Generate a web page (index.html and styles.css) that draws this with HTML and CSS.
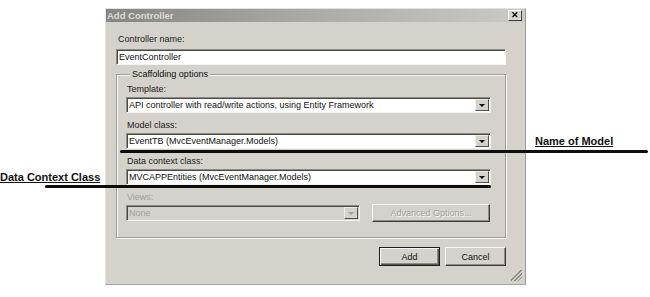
FILE: index.html
```html
<!DOCTYPE html>
<html>
<head>
<meta charset="utf-8">
<link rel="stylesheet" href="styles.css">
</head>
<body>
<div class="page">
  <div class="dialog">
    <div class="titlebar">
      <span class="title">Add Controller</span>
      <span class="close">&#x2715;</span>
    </div>
    <div class="content">
      <div class="label first">Controller name:</div>
      <div class="textbox">EventController</div>
      <div class="group">
        <div class="legend">Scaffolding options</div>
        <div class="label top">Template:</div>
        <div class="combo"><span class="val">API controller with read/write actions, using Entity Framework</span><span class="drop"><i class="arrow"></i></span></div>
        <div class="label">Model class:</div>
        <div class="combo"><span class="val">EventTB (MvcEventManager.Models)</span><span class="drop"><i class="arrow"></i></span></div>
        <div class="label">Data context class:</div>
        <div class="combo"><span class="val">MVCAPPEntities (MvcEventManager.Models)</span><span class="drop"><i class="arrow"></i></span></div>
        <div class="label disabled">Views:</div>
        <div class="views-row">
          <div class="combo off"><span class="val">None</span><span class="drop"><i class="arrow"></i></span></div>
          <div class="btn off adv">Advanced Options...</div>
        </div>
      </div>
      <div class="buttons">
        <div class="btn default">Add</div>
        <div class="btn">Cancel</div>
      </div>
    </div>
    <div class="grip"></div>
  </div>
  <div class="note note-model">Name of Model</div>
  <div class="note note-ctx">Data Context Class</div>
  <div class="rule rule-model"></div>
  <div class="rule rule-ctx"></div>
</div>
</body>
</html>
```
FILE: styles.css
```css
html, body {
  margin: 0;
  padding: 0;
  background: #ffffff;
}
.page {
  position: relative;
  width: 650px;
  height: 297px;
  padding: 8px 0 0 105px;
  box-sizing: border-box;
  font-family: "Liberation Sans", Arial, sans-serif;
  font-size: 9px;
  color: #111;
}
.dialog {
  position: relative;
  width: 421px;
  height: 277px;
  box-sizing: border-box;
  background: #d5d2cb;
  border: 1px solid;
  border-color: #e4e2dc #9c9a94 #a8a6a0 #e4e2dc;
}
.titlebar {
  height: 13px;
  display: flex;
  align-items: center;
  justify-content: space-between;
  background: linear-gradient(to right, #86857f 0%, #a9a8a3 45%, #cbcac5 100%);
  padding-right: 3px;
}
.title {
  font-weight: bold;
  font-size: 9.5px;
  color: #dddbd5;
  padding-left: 1px;
  line-height: 13px;
}
.close {
  width: 14px;
  height: 11px;
  box-sizing: border-box;
  background: #d8d6d0;
  border: 1px solid;
  border-color: #ffffff #404040 #404040 #ffffff;
  font-size: 9px;
  font-weight: bold;
  line-height: 9px;
  text-align: center;
  color: #000;
}
.content {
  padding: 0 19px 0 10px;
}
.label {
  height: 11px;
  line-height: 11px;
  margin: 7px 0 2px 1px;
  white-space: nowrap;
  color: #1a1a1a;
}
.label.first {
  margin: 12px 0 4px 2px;
}
.label.top {
  margin-top: 4px;
}
.label.disabled {
  color: #a3a19b;
}
.textbox {
  height: 16px;
  box-sizing: border-box;
  background: #fff;
  border: 1px solid;
  border-color: #8e8c86 #f4f3f0 #f4f3f0 #8e8c86;
  box-shadow: inset 1px 1px 0 #4a4945;
  line-height: 14px;
  padding-left: 2px;
  white-space: nowrap;
}
.group {
  margin-top: 9px;
  height: 164px;
  box-sizing: border-box;
  border: 1px solid #a19e97;
  box-shadow: inset 1px 1px 0 #fbfaf7, 1px 1px 0 #fbfaf7;
  padding: 0 14px 0 9px;
}
.legend {
  display: table;
  margin: -6px 0 0 4px;
  padding: 0 2px;
  background: #d5d2cb;
  line-height: 11px;
  height: 11px;
}
.combo {
  height: 16px;
  box-sizing: border-box;
  background: #fff;
  border: 1px solid;
  border-color: #8e8c86 #f4f3f0 #f4f3f0 #8e8c86;
  box-shadow: inset 1px 1px 0 #4a4945;
  display: flex;
  align-items: stretch;
}
.combo .val {
  flex: 1;
  line-height: 14px;
  padding-left: 2px;
  white-space: nowrap;
  overflow: hidden;
}
.drop {
  width: 14px;
  margin: 1px 1px 1px 0;
  box-sizing: border-box;
  background: #d5d2cb;
  border: 1px solid;
  border-color: #f0efea #505050 #505050 #f0efea;
  display: flex;
  align-items: center;
  justify-content: center;
}
.arrow {
  width: 0;
  height: 0;
  border-left: 3px solid transparent;
  border-right: 3px solid transparent;
  border-top: 3px solid #000;
}
.views-row {
  display: flex;
  align-items: flex-start;
  gap: 12px;
}
.combo.off {
  width: 234px;
  background: #d5d2cb;
  color: #a3a19b;
}
.combo.off .arrow {
  border-top-color: #a3a19b;
}
.btn {
  width: 61px;
  height: 19px;
  box-sizing: border-box;
  border: 1px solid;
  border-color: #f7f6f3 #3c3b38 #3c3b38 #f7f6f3;
  box-shadow: inset -1px -1px 0 #8e8c86;
  display: flex;
  align-items: center;
  justify-content: center;
  font-size: 9px;
  color: #111;
  background: #d5d2cb;
}
.btn.adv {
  width: 118px;
  height: 18px;
  margin-top: -1px;
}
.btn.off {
  color: #a3a19b;
  text-shadow: 1px 1px 0 #f7f6f3;
}
.btn.default {
  border: 1px solid #1f1f1d;
  box-shadow: inset 1px 1px 0 #f7f6f3, inset -1px -1px 0 #55544f, inset -2px -2px 0 #8e8c86;
}
.buttons {
  display: flex;
  justify-content: flex-end;
  gap: 5px;
  margin-top: 9px;
}
.grip {
  position: absolute;
  right: 3px;
  bottom: 3px;
  width: 11px;
  height: 11px;
  background: linear-gradient(135deg,
    transparent 0, transparent 45%, #8e8c86 45%, #8e8c86 52%, transparent 52%, transparent 62%,
    #8e8c86 62%, #8e8c86 69%, transparent 69%, transparent 79%,
    #8e8c86 79%, #8e8c86 86%, transparent 86%);
}
.note {
  position: absolute;
  font-family: "Liberation Sans", Arial, sans-serif;
  font-weight: bold;
  font-size: 11px;
  text-decoration: underline;
  color: #111;
  white-space: nowrap;
  line-height: 12px;
}
.note-model {
  left: 535px;
  top: 135px;
}
.note-ctx {
  left: 0px;
  top: 171px;
}
.rule {
  position: absolute;
  height: 3px;
  background: #0d0d0d;
  border-radius: 2px;
}
.rule-model {
  left: 120px;
  width: 528px;
  top: 150px;
}
.rule-ctx {
  left: 45px;
  width: 446px;
  top: 185px;
}
```
